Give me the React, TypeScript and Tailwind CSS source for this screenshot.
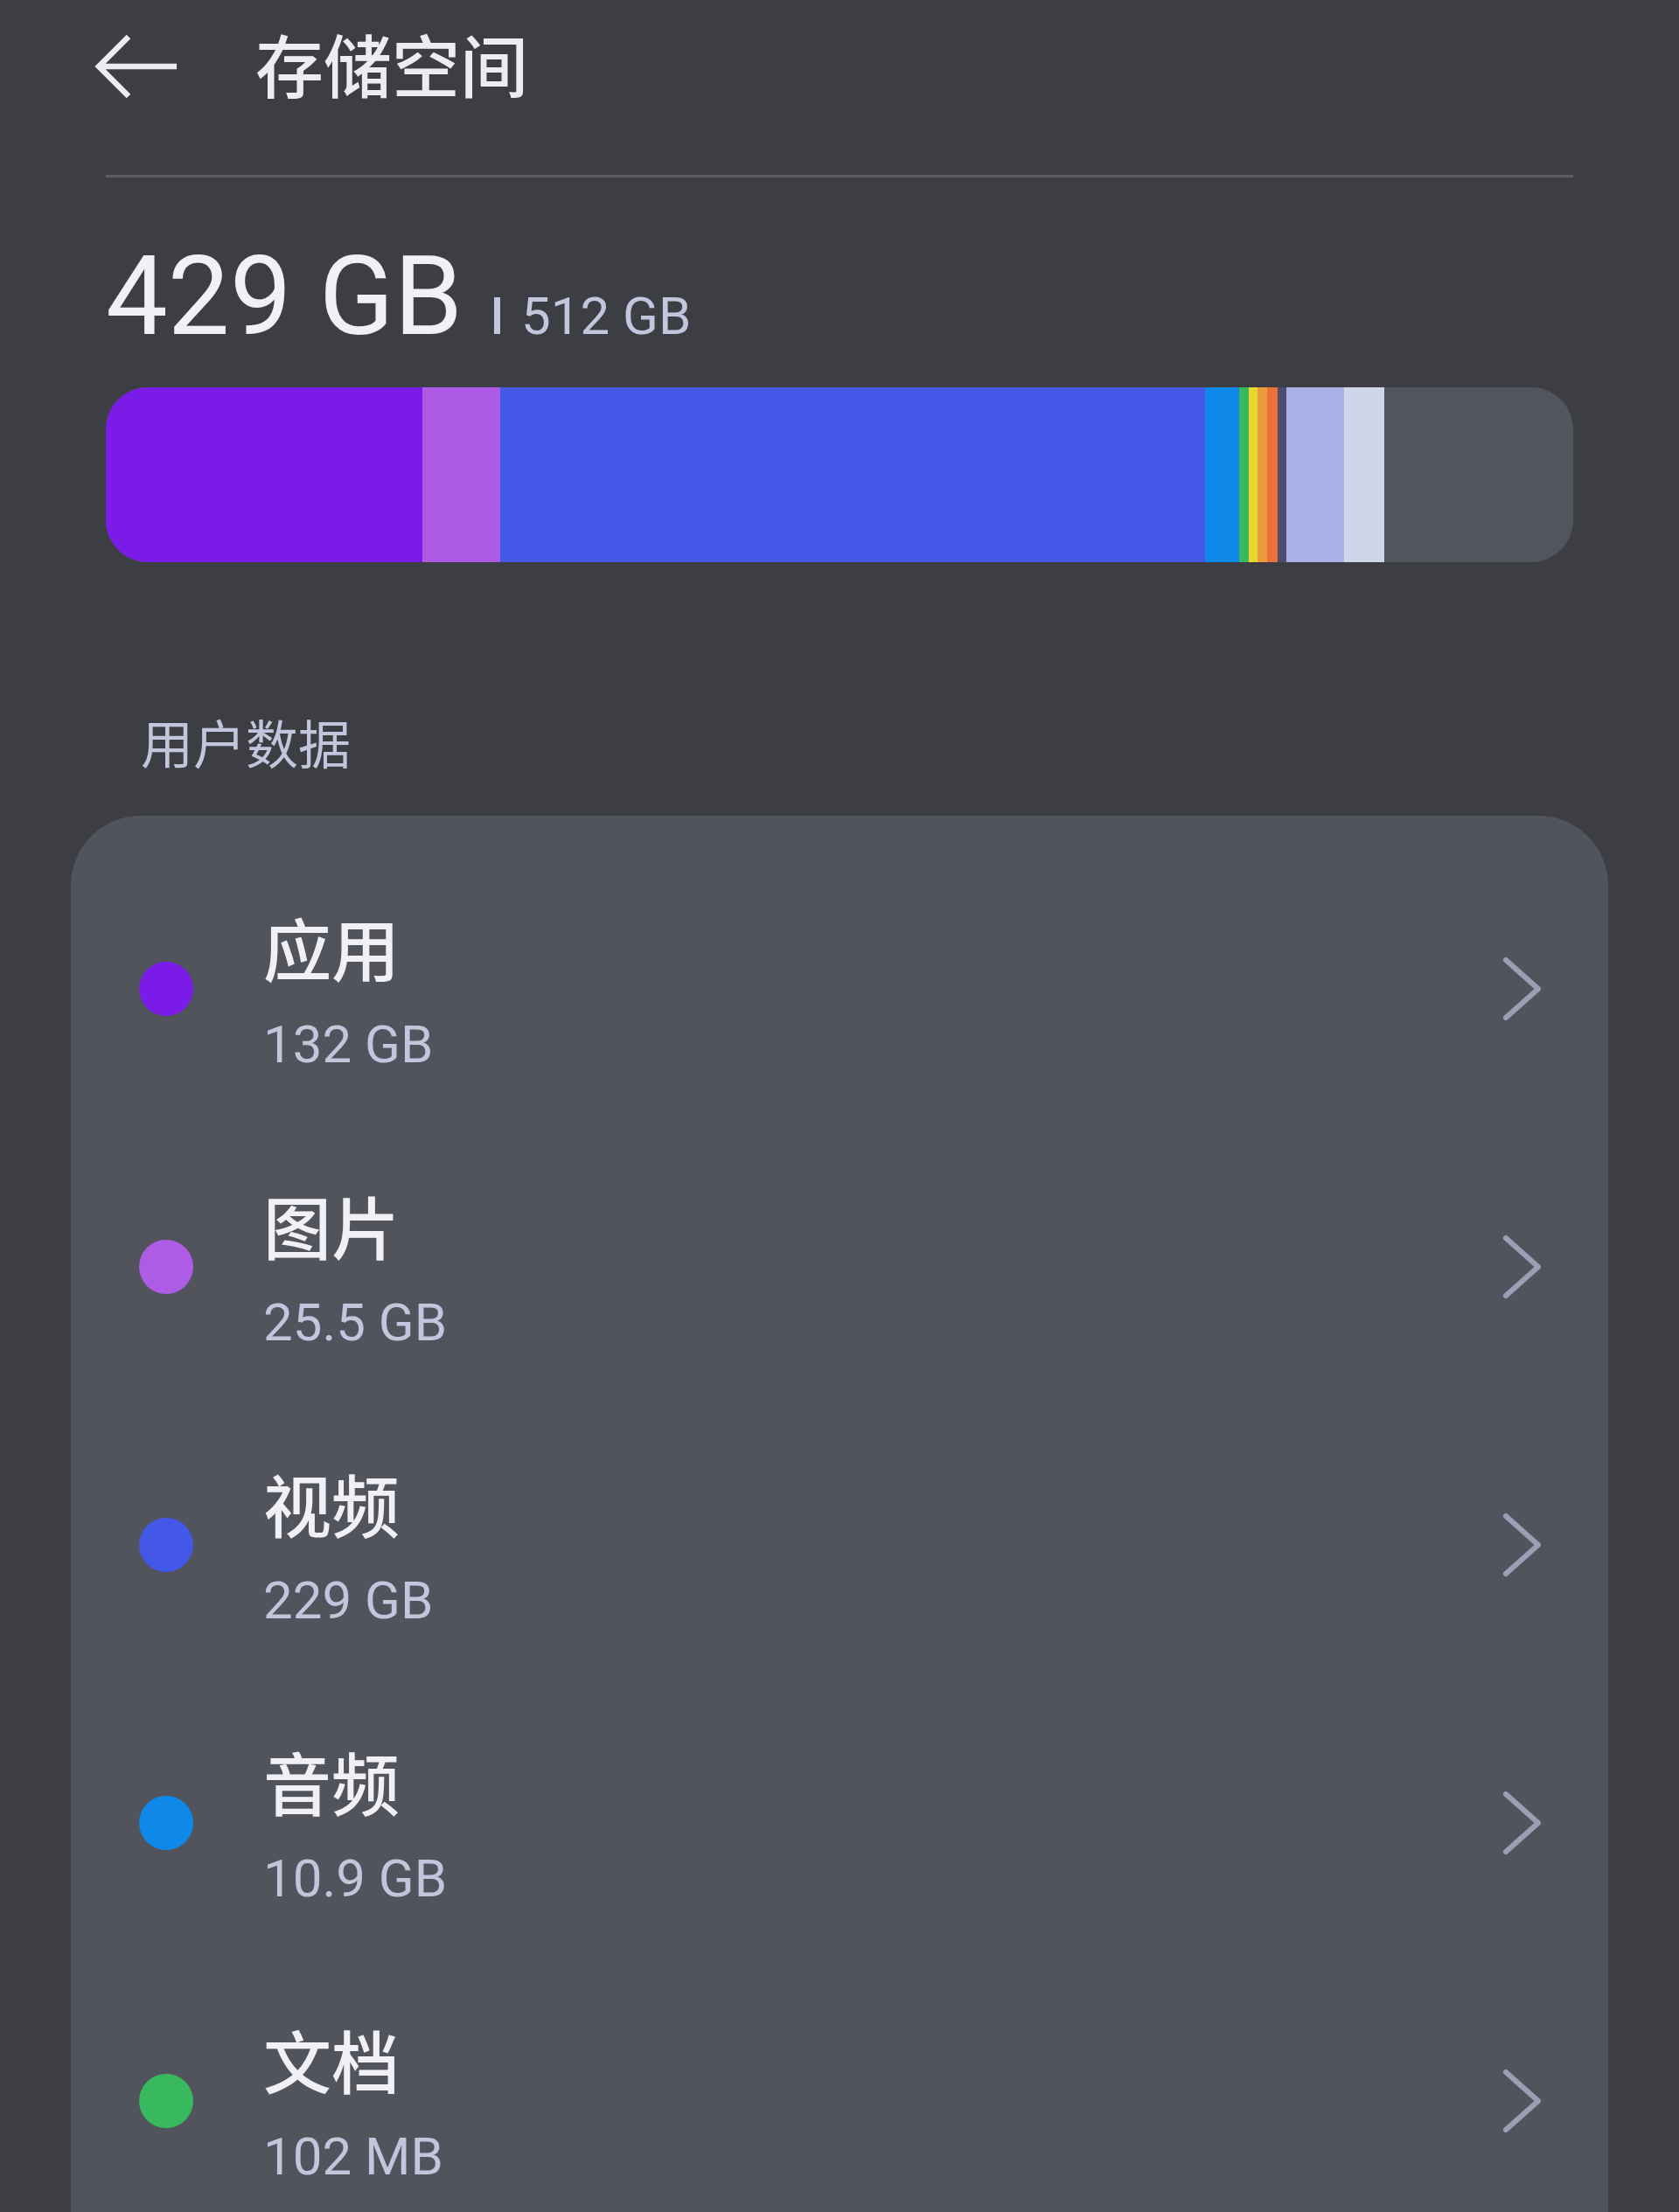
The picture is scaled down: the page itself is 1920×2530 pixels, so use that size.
import React from "react";

type Row = {
  name: string;
  size: string;
  dot: string;
};

const rows: Row[] = [
  { name: "应用", size: "132 GB", dot: "bg-[#7a1be8]" },
  { name: "图片", size: "25.5 GB", dot: "bg-[#ae5ce6]" },
  { name: "视频", size: "229 GB", dot: "bg-[#4458e7]" },
  { name: "音频", size: "10.9 GB", dot: "bg-[#0e89e9]" },
  { name: "文档", size: "102 MB", dot: "bg-[#38b95f]" },
];

// widths measured off the usage bar, left to right
const segments = [
  "w-[362px] bg-[#7a1be8]",
  "w-[89px] bg-[#ad5ae5]",
  "w-[806px] bg-[#4458e7]",
  "w-[39px] bg-[#0e89e9]",
  "w-[11px] bg-[#38b95e]",
  "w-[10px] bg-[#e9d62f]",
  "w-[11px] bg-[#eb9b3c]",
  "w-[12px] bg-[#ea7236]",
  "w-[10px] bg-[#4a4d6d]",
  "w-[66px] bg-[#aab1e7]",
  "w-[46px] bg-[#cfd6e9]",
];

function BackArrow() {
  return (
    <svg width="100" height="76" viewBox="0 0 100 76" fill="none">
      <path
        d="M39 4 L5 38 L39 72 M5 38 L94 38"
        stroke="#ececf1"
        strokeWidth="6.5"
        strokeLinejoin="miter"
      />
    </svg>
  );
}

function Chevron() {
  return (
    <svg width="48" height="76" viewBox="0 0 48 76" fill="none">
      <path
        d="M5 5 L42 38 L5 71"
        stroke="#9c9eb5"
        strokeWidth="6"
        strokeLinecap="round"
        strokeLinejoin="round"
      />
    </svg>
  );
}

function StorageRow({ row }: { row: Row }) {
  return (
    <div className="flex h-[318px] items-center pl-[78px] pr-[74px]">
      <div className={`h-[62px] w-[62px] shrink-0 rounded-full ${row.dot}`} />
      <div className="ml-[80px] flex flex-1 flex-col pt-[6px]">
        <span className="font-['Noto_Sans_CJK_SC'] text-[78px] font-medium leading-none text-[#f1f1f5]">
          {row.name}
        </span>
        <span className="mt-[43px] text-[60px] leading-none text-[#c3c5dd]">
          {row.size}
        </span>
      </div>
      <Chevron />
    </div>
  );
}

export default function App() {
  return (
    <div className="h-[2530px] w-[1920px] overflow-hidden bg-[#3d3e44] font-['Roboto','Noto_Sans_CJK_SC',sans-serif]">
      <header className="flex h-[152px] items-center pl-[108px]">
        <BackArrow />
        <h1 className="mb-[8px] ml-[84px] font-['Noto_Sans_CJK_SC'] text-[78px] font-medium leading-none text-[#ececf1]">
          存储空间
        </h1>
      </header>
      <div className="mx-[121px] mt-[48px] h-[3px] bg-[#5b5c66]" />

      <section className="mx-[121px] mt-[73px]">
        <div className="flex items-baseline">
          <span className="text-[126px] leading-none text-[#f1f1f5]">429 GB</span>
          <span className="ml-[36px] inline-block h-[42px] w-[7px] bg-[#c3c5dd]" />
          <span className="ml-[24px] text-[60px] leading-none text-[#c3c5dd]">512 GB</span>
        </div>
        <div className="mt-[41px] flex h-[200px] overflow-hidden rounded-[48px] bg-[#52545e]">
          {segments.map((s, i) => (
            <div key={i} className={`h-full shrink-0 ${s}`} />
          ))}
          <div className="flex-1" />
        </div>
      </section>

      <h2 className="ml-[161px] mt-[175px] font-['Noto_Sans_CJK_SC'] text-[60px] leading-none text-[#c3c5dd]">
        用户数据
      </h2>

      <div className="mx-[81px] mt-[55px] rounded-[80px] bg-[#52545d] pb-[120px] pt-[39px]">
        {rows.map((r) => (
          <StorageRow key={r.name} row={r} />
        ))}
      </div>
    </div>
  );
}
